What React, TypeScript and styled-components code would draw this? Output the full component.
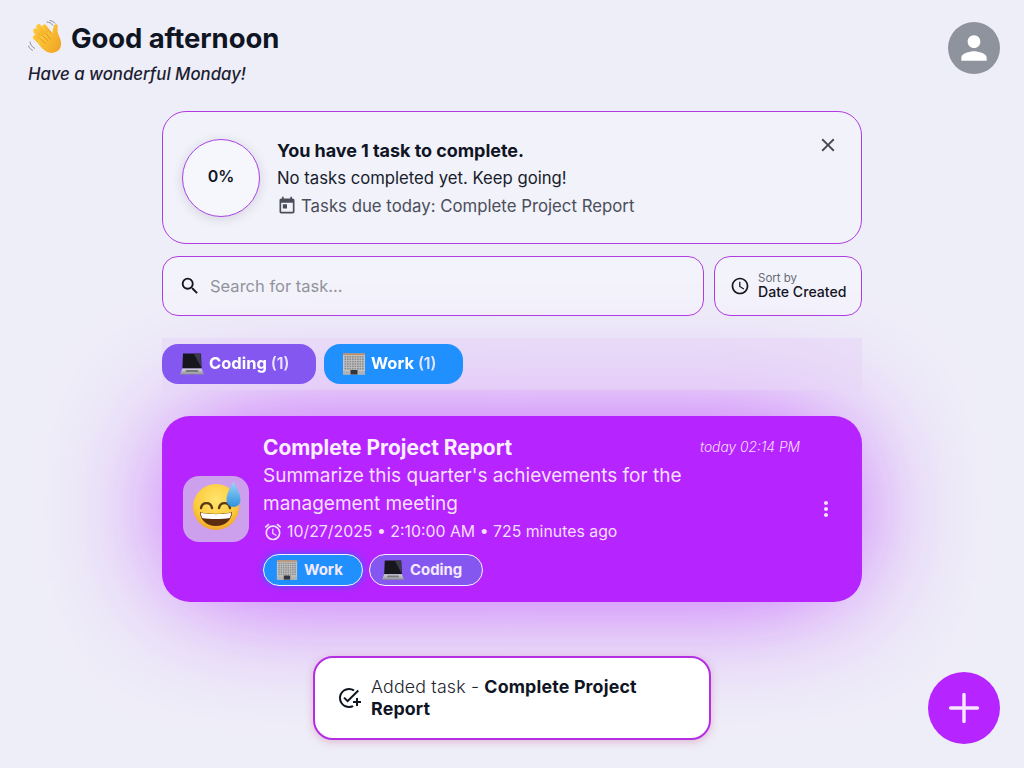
import React from "react";
import styled, { createGlobalStyle } from "styled-components";
import { MdClose, MdSearch, MdToday, MdAccessTime, MdAddTask, MdAlarm, MdMoreVert, MdPerson } from "react-icons/md";
import { Plus } from "lucide-react";

const Global = createGlobalStyle`
  html, body { margin: 0; padding: 0; height: 100%; background: #eeeef8; overflow: hidden; }
  body { font-family: Inter, "Noto Sans", "Liberation Sans", sans-serif; color: #101524; }
  * { box-sizing: border-box; }
`;

const Page = styled.div`
  width: 1024px;
  height: 768px;
  position: relative;
  overflow: hidden;
`;

const Header = styled.header`
  display: flex;
  justify-content: space-between;
  align-items: flex-start;
  height: 111px;
  padding: 19px 24px 0 28px;
`;

const Greeting = styled.div`
  display: flex;
  flex-direction: column;
`;

const Title = styled.h1`
  display: flex;
  align-items: center;
  gap: 7px;
  margin: 0;
  height: 38px;
  font-size: 27.5px;
  font-weight: 700;
  letter-spacing: -0.1px;
  white-space: nowrap;
`;

const Subtitle = styled.p`
  margin: 6px 0 0;
  font-size: 16.8px;
  line-height: 22px;
  font-style: italic;
  font-weight: 500;
  color: #1b2030;
`;

const Avatar = styled.div`
  width: 52px;
  height: 52px;
  margin-top: 3px;
  border-radius: 50%;
  background: #8f939d;
  color: #fff;
  display: flex;
  align-items: center;
  justify-content: center;
  font-size: 38px;
`;

const Main = styled.main`
  width: 700px;
  margin: 0 auto;
  display: flex;
  flex-direction: column;
`;

const ProgressCard = styled.section`
  position: relative;
  height: 133px;
  border: 1px solid #b03de0;
  border-radius: 24px;
  background: #f1f2fa;
  display: flex;
  align-items: center;
  padding: 0 19px;
  gap: 17px;
`;

const Ring = styled.div`
  width: 78px;
  height: 78px;
  flex: none;
  border-radius: 50%;
  border: 1px solid #a844e4;
  background: #f6f6fd;
  box-shadow: 0 2px 12px rgba(40, 30, 60, 0.14);
  display: flex;
  align-items: center;
  justify-content: center;
  padding-bottom: 3px;
  font-size: 16px;
  font-weight: 600;
`;

const ProgressText = styled.div`
  display: flex;
  flex-direction: column;
`;

const ProgressTitle = styled.div`
  font-size: 18px;
  font-weight: 700;
  line-height: 28px;
  letter-spacing: -0.05px;
`;

const ProgressLine = styled.div`
  font-size: 16.7px;
  line-height: 27px;
  color: #181c2b;
`;

const DueLine = styled.div`
  display: flex;
  align-items: center;
  gap: 4px;
  margin-top: 1px;
  font-size: 16.8px;
  line-height: 26px;
  color: #4b4e5a;
  svg { font-size: 20px; }
`;

const CloseButton = styled.button`
  position: absolute;
  top: 21px;
  right: 21px;
  width: 24px;
  height: 24px;
  padding: 0;
  border: 0;
  background: none;
  color: #44474f;
  font-size: 22px;
  display: flex;
  align-items: center;
  justify-content: center;
`;

const SearchRow = styled.div`
  display: flex;
  gap: 10px;
  margin-top: 12px;
  height: 60px;
`;

const SearchBox = styled.div`
  flex: 1;
  border: 1px solid #b03de0;
  border-radius: 16px;
  background: #f3f3fb;
  display: flex;
  align-items: center;
  gap: 9px;
  padding: 0 16px;
  color: #14161f;
  font-size: 22px;
  svg { flex: none; }
`;

const SearchPlaceholder = styled.span`
  font-size: 16.5px;
  color: #92939c;
`;

const SortButton = styled.div`
  width: 148px;
  border: 1px solid #b03de0;
  border-radius: 16px;
  background: #f3f3fb;
  display: flex;
  align-items: center;
  gap: 8px;
  padding: 0 15px;
  font-size: 20px;
  color: #14161f;
  svg { flex: none; }
`;

const SortText = styled.div`
  display: flex;
  flex-direction: column;
  padding-bottom: 1px;
`;

const SortLabel = styled.span`
  font-size: 11.5px;
  line-height: 13px;
  color: #666a75;
`;

const SortValue = styled.span`
  font-size: 14.1px;
  line-height: 14px;
  font-weight: 500;
  white-space: nowrap;
`;

const CategoryStrip = styled.div`
  position: relative;
  z-index: 1;
  height: 52px;
  margin-top: 22px;
  padding: 6px 0;
  display: flex;
  gap: 8px;
  background: rgba(232, 214, 248, 0.55);
  backdrop-filter: blur(8px);
`;

const CategoryChip = styled.div<{ $color: string; $width: number }>`
  width: ${(p) => p.$width}px;
  height: 40px;
  border-radius: 16px;
  background: ${(p) => p.$color};
  color: #fff;
  display: flex;
  align-items: center;
  gap: 5px;
  padding-left: 18px;
  font-size: 16.5px;
  font-weight: 700;
  white-space: nowrap;
  span { margin-top: -2px; }
  small { font-size: 16px; font-weight: 600; color: #e8e4ff; }
`;

const TaskCard = styled.article`
  margin-top: 26px;
  height: 186px;
  border-radius: 28px;
  background: #b624ff;
  color: #f6dfff;
  box-shadow: 0 0 128px -20px #b624ff;
  display: flex;
  align-items: center;
  padding: 0 24px 0 21px;
`;

const EmojiTile = styled.div`
  width: 66px;
  height: 66px;
  flex: none;
  border-radius: 16px;
  background: #cda0ee;
  display: flex;
  align-items: center;
  justify-content: center;
  margin-right: 14px;
`;

const TaskBody = styled.div`
  flex: 1;
  min-width: 0;
  display: flex;
  flex-direction: column;
  padding: 1px 6px 0 0;
`;

const TaskHead = styled.div`
  display: flex;
  justify-content: space-between;
  align-items: center;
  height: 28px;
`;

const TaskTitle = styled.div`
  font-size: 20.9px;
  font-weight: 700;
  color: #fbeeff;
`;

const TaskTime = styled.div`
  font-size: 13.8px;
  font-style: italic;
  font-weight: 300;
  color: #f6dfff;
  margin-right: 8px;
`;

const TaskDesc = styled.div`
  margin-top: 1px;
  font-size: 19px;
  line-height: 28px;
  width: 460px;
`;

const TaskDate = styled.div`
  display: flex;
  align-items: center;
  gap: 4px;
  font-size: 15.85px;
  line-height: 28px;
  svg { font-size: 20px; }
`;

const TagRow = styled.div`
  display: flex;
  gap: 6px;
  margin-top: 8px;
`;

const Tag = styled.div<{ $color: string; $width: number; $glow?: boolean }>`
  width: ${(p) => p.$width}px;
  height: 32px;
  border: 1px solid #f8eeff;
  border-radius: 16px;
  background: ${(p) => p.$color};
  color: #f4eaff;
  box-shadow: ${(p) => (p.$glow ? "0 0 6px #2a6cff" : "none")};
  display: flex;
  align-items: center;
  gap: 6px;
  padding-left: 12px;
  font-size: 14.9px;
  font-weight: 700;
`;

const MoreButton = styled.div`
  width: 24px;
  height: 24px;
  flex: none;
  display: flex;
  align-items: center;
  justify-content: center;
  font-size: 24px;
  color: #f6dfff;
`;

const Toast = styled.div`
  position: absolute;
  z-index: 3;
  left: 313px;
  top: 656px;
  width: 398px;
  height: 84px;
  border: 2px solid #b42fe4;
  border-radius: 20px;
  background: #fff;
  box-shadow: 0 2px 8px rgba(190, 60, 120, 0.3);
  display: flex;
  align-items: center;
  gap: 10px;
  padding: 0 22px;
  font-size: 24px;
  svg { flex: none; }
`;

const ToastText = styled.div`
  width: 285px;
  font-size: 17.8px;
  line-height: 22px;
  font-weight: 300;
  letter-spacing: 0.17px;
  color: #22252f;
  b { font-weight: 700; color: #101524; }
`;

const Fab = styled.button`
  position: absolute;
  z-index: 3;
  right: 24px;
  bottom: 24px;
  width: 72px;
  height: 72px;
  padding: 0;
  border: 0;
  border-radius: 50%;
  background: #b624ff;
  color: #f6e6ff;
  display: flex;
  align-items: center;
  justify-content: center;
`;

const Wave = () => (
  <svg width="36" height="36" viewBox="0 0 36 36" aria-hidden="true">
    <defs>
      <linearGradient id="hand" x1="0.2" y1="0" x2="0.8" y2="1">
        <stop offset="0" stopColor="#fdcc3e" />
        <stop offset="1" stopColor="#f0a020" />
      </linearGradient>
    </defs>
    <g stroke="#8e8e98" strokeWidth="1" fill="none" strokeLinecap="round">
      <path d="M19 2c2.400 0 4.600 1.300 6 3.300M22 .5c2 .2 3.800 1.200 5 2.800" />
      <path d="M2 22c.5 2.800 2 5 4.500 6.300M.5 26c.8 2 2.200 3.500 4 4.300" />
    </g>
    <g transform="rotate(-28 18 18)" fill="url(#hand)">
      <path d="M11 26 L6.500 13 a2.300 2.300 0 0 1 4.400-1.500 L15 21 Z" />
      <path d="M12 20 L9.700 7 a2.500 2.500 0 0 1 4.900-.9 L18 18 Z" />
      <path d="M15 18 L14.400 4.800 a2.500 2.500 0 0 1 5-.3 L22.500 17 Z" />
      <path d="M19 18 L19.400 7 a2.400 2.400 0 0 1 4.700-.3 L26 18 Z" />
      <path d="M8.500 18 C9 27 13 35 20.500 35 C28 35 30.500 28 30.500 22 C30.500 18 32.500 15 34 13 C35 10.800 32.500 9.300 30.800 11 C28 13.500 26 16 25 18.500 L24 14 L12 14 Z" />
    </g>
    <g transform="rotate(-28 18 18)">
      <path d="M12 14.500l3 8M16 14l2.500 7.500M20 13.500l1.500 8" stroke="#d98a14" strokeWidth=".7" fill="none" />
    </g>
  </svg>
);

const Laptop = ({ size = 24 }: { size?: number }) => (
  <svg width={size} height={size} viewBox="0 0 24 24" aria-hidden="true">
    <defs>
      <linearGradient id="lapbase" x1="0" y1="0" x2="0" y2="1">
        <stop offset="0" stopColor="#d8d8dc" />
        <stop offset="1" stopColor="#8f8f96" />
      </linearGradient>
    </defs>
    <path d="M3 1.500h18l.6 15H2.400z" fill="#16161c" />
    <path d="M14 2h6.600l.5 13z" fill="#3c3c46" />
    <path d="M2.400 16.500h19.200L24 22.500H0z" fill="url(#lapbase)" />
    <path d="M6 18h12l.5 2h-13z" fill="#77777e" />
  </svg>
);

const Office = ({ size = 24 }: { size?: number }) => {
  const cells: React.ReactNode[] = [];
  for (let y = 0; y < 6; y++) {
    for (let x = 0; x < 8; x++) {
      cells.push(<rect key={`${x}-${y}`} x={2.500 + x * 2.500} y={4 + y * 2.400} width="1.700" height="1.600" fill="#8a8d96" />);
    }
  }
  return (
    <svg width={size} height={size} viewBox="0 0 24 24" aria-hidden="true">
      <rect x="1" y="1.500" width="22" height="21" fill="#c5c3bd" />
      <rect x="1" y="1.500" width="22" height="1.500" fill="#c58a5e" />
      {cells}
      <rect x="1" y="19" width="22" height="3.500" fill="#b2b2b2" />
      <rect x="8.500" y="18" width="7" height="4.500" fill="#33363f" />
    </svg>
  );
};

const SweatGrin = () => (
  <svg width="50" height="56" viewBox="0 -6 50 56" aria-hidden="true">
    <defs>
      <radialGradient id="face" cx="0.5" cy="0.35" r="0.7">
        <stop offset="0" stopColor="#ffe56e" />
        <stop offset="0.65" stopColor="#fdcb3c" />
        <stop offset="1" stopColor="#ee9a22" />
      </radialGradient>
      <linearGradient id="drop" x1="0" y1="0" x2="0" y2="1">
        <stop offset="0" stopColor="#9ed8f8" />
        <stop offset="1" stopColor="#2f92de" />
      </linearGradient>
    </defs>
    <circle cx="25" cy="20" r="23" fill="url(#face)" />
    <path d="M10 21c1.200-6.500 9.800-6.500 11 0" stroke="#5a3a16" strokeWidth="2.400" fill="none" strokeLinecap="round" />
    <path d="M28 21c1.200-6.500 9.800-6.500 11 0" stroke="#5a3a16" strokeWidth="2.400" fill="none" strokeLinecap="round" />
    <path d="M9 25c6 2.500 26 2.500 32 0c0 8-7 14-16 14S9 33 9 25z" fill="#5c2c10" />
    <path d="M9.800 25.500c6 2.200 24.400 2.200 30.400 0c0 2-.5 3.500-1.400 5.500c-7 1.300-20.600 1.300-27.600 0c-.9-2-1.400-3.500-1.400-5.500z" fill="#fff" />
    <path d="M42.500-6c-.5 3.500-7 10-7 19a7 7 0 0 0 14 0c0-9-6.500-15.500-7-19z" fill="url(#drop)" />
  </svg>
);

export default function App() {
  return (
    <Page>
      <Global />
      <Header>
        <Greeting>
          <Title>
            <Wave />
            Good afternoon
          </Title>
          <Subtitle>Have a wonderful Monday!</Subtitle>
        </Greeting>
        <Avatar>
          <MdPerson />
        </Avatar>
      </Header>
      <Main>
        <ProgressCard>
          <Ring>0%</Ring>
          <ProgressText>
            <ProgressTitle>You have 1 task to complete.</ProgressTitle>
            <ProgressLine>No tasks completed yet. Keep going!</ProgressLine>
            <DueLine>
              <MdToday />
              Tasks due today: Complete Project Report
            </DueLine>
          </ProgressText>
          <CloseButton aria-label="Close">
            <MdClose />
          </CloseButton>
        </ProgressCard>
        <SearchRow>
          <SearchBox>
            <MdSearch />
            <SearchPlaceholder>Search for task...</SearchPlaceholder>
          </SearchBox>
          <SortButton>
            <MdAccessTime />
            <SortText>
              <SortLabel>Sort by</SortLabel>
              <SortValue>Date Created</SortValue>
            </SortText>
          </SortButton>
        </SearchRow>
        <CategoryStrip>
          <CategoryChip $color="#8458f0" $width={154}>
            <Laptop />
            <span>
              Coding <small>(1)</small>
            </span>
          </CategoryChip>
          <CategoryChip $color="#2090ff" $width={139}>
            <Office />
            <span>
              Work <small>(1)</small>
            </span>
          </CategoryChip>
        </CategoryStrip>
        <TaskCard>
          <EmojiTile>
            <SweatGrin />
          </EmojiTile>
          <TaskBody>
            <TaskHead>
              <TaskTitle>Complete Project Report</TaskTitle>
              <TaskTime>today 02:14 PM</TaskTime>
            </TaskHead>
            <TaskDesc>Summarize this quarter's achievements for the management meeting</TaskDesc>
            <TaskDate>
              <MdAlarm />
              10/27/2025 • 2:10:00 AM • 725 minutes ago
            </TaskDate>
            <TagRow>
              <Tag $color="#2090ff" $width={100} $glow>
                <Office size={22} />
                Work
              </Tag>
              <Tag $color="#8458f0" $width={114}>
                <Laptop size={22} />
                Coding
              </Tag>
            </TagRow>
          </TaskBody>
          <MoreButton>
            <MdMoreVert />
          </MoreButton>
        </TaskCard>
      </Main>
      <Toast>
        <MdAddTask />
        <ToastText>
          Added task - <b>Complete Project Report</b>
        </ToastText>
      </Toast>
      <Fab aria-label="Add task">
        <Plus size={46} strokeWidth={1.8} />
      </Fab>
    </Page>
  );
}
